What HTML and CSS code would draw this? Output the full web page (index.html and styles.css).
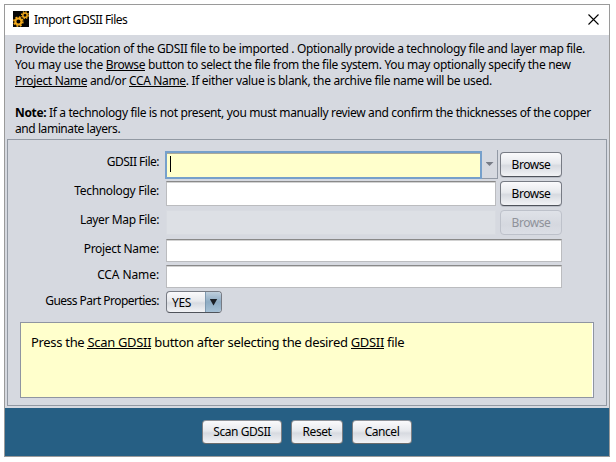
FILE: index.html
```html
<!DOCTYPE html>
<html lang="en">
<head>
<meta charset="utf-8">
<title>Import GDSII Files</title>
<link rel="stylesheet" href="styles.css">
</head>
<body>
<div class="window">
  <header class="titlebar">
    <svg class="app-icon" width="16" height="16" viewBox="0 0 16 16">
      <rect width="16" height="16" fill="#050505"/>
      <g fill="none" stroke="#f0a81c">
        <circle cx="5.4" cy="10.6" r="3" stroke-width="2"/>
        <circle cx="5.4" cy="10.6" r="4.5" stroke-width="1.6" stroke-dasharray="1.9 1.63"/>
        <circle cx="12" cy="4.2" r="2.2" stroke-width="1.5"/>
        <circle cx="12" cy="4.2" r="3.4" stroke-width="1.3" stroke-dasharray="1.4 1.27"/>
      </g>
    </svg>
    <span class="title">Import GDSII Files</span>
    <svg class="close" width="11" height="11" viewBox="0 0 11 11"><path d="M.5 .5l10 10M10.5 .5l-10 10" stroke="#000" stroke-width="1.1"/></svg>
  </header>
  <section class="intro">
    <div class="line l1">Provide the location of the GDSII file to be imported . Optionally provide a technology file and layer map file.</div>
    <div class="line l2">You may use the <u>Browse</u> button to select the file from the file system. You may optionally specify the new</div>
    <div class="line l3"><u>Project Name</u> and/or <u>CCA Name</u>. If either value is blank, the archive file name will be used.</div>
    <div class="line l4"><b>Note:</b> If a technology file is not present, you must manually review and confirm the thicknesses of the copper</div>
    <div class="line l5">and laminate layers.</div>
  </section>
  <main class="panel">
    <div class="row tall first"><label class="w1">GDSII File:</label><div class="field focus"><i class="caret"></i></div><div class="drop"><i></i></div><button class="browse">Browse</button></div>
    <div class="row tall"><label>Technology File:</label><div class="field"></div><button class="browse">Browse</button></div>
    <div class="row tall"><label class="w3">Layer Map File:</label><div class="field off"></div><button class="browse disabled">Browse</button></div>
    <div class="row"><label>Project Name:</label><div class="field"></div></div>
    <div class="row"><label class="w5">CCA Name:</label><div class="field"></div></div>
    <div class="row"><label class="w6">Guess Part Properties:</label><div class="select"><span>YES</span><div class="arrow"><i></i></div></div></div>
    <div class="message"><div class="hint">Press the <u>Scan GDSII</u> button after selecting the desired <u>GDSII</u> file</div></div>
  </main>
  <footer class="footer">
    <button class="scan">Scan GDSII</button>
    <button class="reset">Reset</button>
    <button class="cancel">Cancel</button>
  </footer>
</div>
</body>
</html>
```
FILE: styles.css
```css
* { box-sizing: border-box; }
body { margin: 0; background: #fff; padding: 4px 0 0 4px; font: 12px/16px "Noto Sans", "Open Sans", sans-serif; color: #000; overflow: hidden; }
.window { width: 606px; height: 453px; border: 1px solid #9a9a9a; background: #d6d9e0; display: flex; flex-direction: column; }
.titlebar { height: 30px; background: #fff; display: flex; align-items: center; padding: 0 10px 0 8px; flex: none; }
.app-icon { margin-top: -2px; }
.title { margin-left: 5px; letter-spacing: -0.52px; white-space: nowrap; }
.close { margin: -2px 0 0 auto; }
u { text-decoration: none; box-shadow: inset 0 -1px #000; display: inline-block; height: 14px; line-height: 16px; vertical-align: top; }
.intro { height: 104px; padding: 6px 0 0 10px; flex: none; white-space: nowrap; }
.line { height: 16px; letter-spacing: -0.335px; }
.l2 { letter-spacing: -0.325px; }
.l4 { margin-top: 16px; letter-spacing: -0.355px; }
.l5 { letter-spacing: -0.43px; }
.panel { height: 267px; width: 600px; margin-left: 2px; border: 1px solid #9299a3; flex: none; }
.row { display: flex; height: 23px; margin-bottom: 3px; }
.row.tall { height: 26px; }
.row.first { margin-top: 12px; }
label { width: 151px; margin-right: 7px; text-align: right; white-space: nowrap; letter-spacing: -0.32px; padding-top: 2px; }
.w1 { letter-spacing: -0.5px; }
.w3 { letter-spacing: -0.37px; }
.w5 { letter-spacing: -0.1px; }
.w6 { letter-spacing: -0.53px; }
.field { width: 396px; background: #fff; border: 1px solid #bbbcbf; border-top-color: #898989; box-shadow: inset 0 1px #d2d2d2; }
.tall .field { width: 330px; height: 25px; margin-right: 4px; }
.tall .field.off { background: #dde0e5; border-color: #d8dbe1; box-shadow: none; }
.tall .field.focus { width: 317px; height: 28px; margin: -1px 0 0 -1px; background: #ffffcc; border: 2px solid #76a0cb; box-shadow: inset 0 1px #aaa998; padding: 3px; }
.caret { display: block; width: 1px; height: 16px; background: #000; }
.drop { width: 16px; height: 29px; margin: -2px 2px 0 0; border: solid #9299a5; border-width: 0 1px 1px 0; display: flex; justify-content: center; padding-top: 12px; }
.drop i { width: 8px; height: 4px; background: #777c86; clip-path: polygon(0 0, 100% 0, 50% 100%); }
button, .select { font: inherit; color: #000; letter-spacing: -0.45px; padding: 0; border: 1px solid #777b84; border-bottom-color: #4f535b; border-radius: 4px; background: linear-gradient(#fafafc, #e7e9ed 45%, #d7dae0 55%, #f2f3f6); white-space: nowrap; }
.browse { width: 62px; height: 25px; box-shadow: 0 1px #b9bdc6; }
.browse.disabled { color: #8f929a; border-color: #bdc1ca; background: linear-gradient(#dfe2e8, #d5d8df 60%, #dbdee5); box-shadow: none; }
.select { width: 56px; height: 22px; display: flex; overflow: hidden; line-height: 22px; }
.select span { width: 38px; padding-left: 5px; letter-spacing: -0.4px; }
.arrow { flex: 1; background: linear-gradient(#bfcfdd, #8dabc3 50%, #a6c1d6); border-left: 1px solid #7e99b0; display: flex; align-items: center; justify-content: center; }
.arrow i { width: 8px; height: 7px; background: #1b1f25; clip-path: polygon(0 0, 100% 0, 50% 100%); }
.message { width: 574px; height: 76px; margin: 8px 0 0 12px; border: 1px solid #8f95a1; background: #ffffcc; box-shadow: inset -1px 0 #fff; padding: 11px 0 0 10px; }
.hint { font-size: 13px; letter-spacing: -0.315px; white-space: nowrap; }
.hint u { height: 15px; }
.footer { flex: 1; margin-top: 2px; background: #265f84; display: flex; justify-content: center; gap: 9px; padding: 12px 0 0; }
.footer button { height: 24px; border-color: #8d9299 #7e8084 #6c6c6c; }
.scan { width: 80px; }
.reset { width: 52px; }
.cancel { width: 60px; }
```
